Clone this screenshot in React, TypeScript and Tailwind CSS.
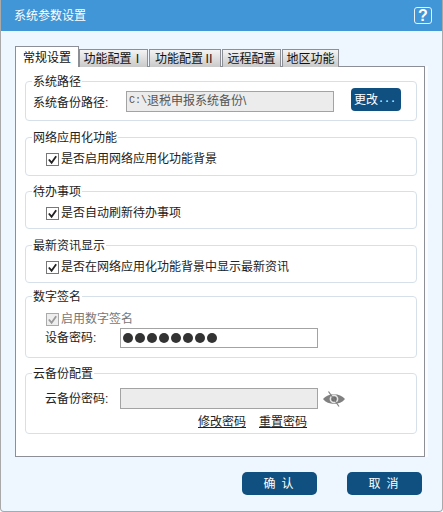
import type { ReactNode } from "react";

const FONT = "font-['Liberation_Sans','Noto_Sans_CJK_SC',sans-serif]";

function Group({ title, className, children }: { title: string; className: string; children: ReactNode }) {
  return (
    <fieldset className={`ml-[9px] w-[392px] rounded-[4px] border border-[#d6e0e9] ${className}`}>
      <legend className="ml-[6px] bg-white px-px text-[12px] leading-[14px] text-[#222]">
        <span className="block translate-y-px">{title}</span>
      </legend>
      {children}
    </fieldset>
  );
}

function Check({ label, disabled }: { label: string; disabled?: boolean }) {
  return (
    <label className={`flex items-center gap-[2px] text-[12px] leading-4 ${disabled ? "text-[#777]" : "text-[#222]"}`}>
      <span className={`flex h-[13px] w-[13px] items-center justify-center border ${disabled ? "border-[#aaa] bg-[#eee]" : "border-[#777] bg-white"}`}>
        <svg viewBox="0 0 12 12" className="h-[11px] w-[11px]">
          <path d="M2 6 L5 9.5 L10 2.5" fill="none" stroke={disabled ? "#999" : "#222"} strokeWidth="2" />
        </svg>
      </span>
      {label}
    </label>
  );
}

function Tab({ label, className }: { label: string; className: string }) {
  return (
    <div className={`flex h-[18px] items-center justify-center border border-b-0 border-[#8c8f96] bg-gradient-to-b from-[#f4f4f4] to-[#c9c9c9] text-[12px] text-[#111] ${className}`}>
      {label}
    </div>
  );
}

function EyeIcon() {
  return (
    <svg viewBox="0 0 22 16" className="h-[16px] w-[22px]">
      <path d="M0 8 C5 1.5 17 1.5 22 8 C17 14.5 5 14.5 0 8 Z" fill="#808080" />
      <circle cx="11" cy="8" r="4.4" fill="#e6e6e6" />
      <circle cx="11" cy="8" r="2.8" fill="#707070" />
      <path d="M5.5 0.5 L16 15.5" stroke="#808080" strokeWidth="1.2" />
    </svg>
  );
}

export default function App() {
  return (
    <div className={`flex h-[512px] w-[443px] flex-col overflow-hidden rounded-b-[4px] border-x border-b border-[#a9a9a9] bg-[#eef6ff] ${FONT}`}>
      <div className="-mx-px flex h-[31px] shrink-0 items-center justify-between bg-[#4096d6] pl-[14px] pr-[11px]">
        <span className="text-[12px] text-white">系统参数设置</span>
        <span className="flex h-[17px] w-[18px] items-center justify-center rounded-[3px] border border-[#e8f3fb] text-[16px] font-bold leading-none text-white">?</span>
      </div>

      <div className="pl-[14px] pt-[15px]">
        <div className="relative z-10 -mb-px flex h-[21px] items-end gap-px">
          <div className="-mr-px flex h-[21px] w-[64px] items-center justify-center border border-b-0 border-[#8c8f96] bg-white pt-px text-[12px] text-[#111]">常规设置</div>
          <Tab label="功能配置Ⅰ" className="w-[69px]" />
          <Tab label="功能配置Ⅱ" className="w-[72px]" />
          <Tab label="远程配置" className="w-[59px]" />
          <Tab label="地区功能" className="w-[57px]" />
        </div>

        <div className="h-[391px] w-[410px] border border-[#8c8f96] bg-white pt-[7px] shadow-[3px_0_0_#fafcff]">
          <Group title="系统路径" className="h-[47px]">
            <div className="flex items-start pl-[7px]">
              <span className="mt-[6px] w-[93px] text-[12px] leading-[18px] text-[#222]">系统备份路径:</span>
              <div className="mt-[3px] flex h-[21px] w-[208px] items-center border border-[#a3a3a3] bg-[#ececec] pb-[2px] pl-[2px] text-[12px] text-[#555]">
                <span className="font-['Liberation_Mono'] text-[10px]">C:\</span>退税申报系统备份\
              </div>
              <button className="ml-[17px] flex h-[23px] w-[50px] items-center rounded-[4px] bg-[#105080] pl-[3px] text-[12px] text-white">
                更改<span className="font-['Liberation_Mono'] text-[10px]">...</span>
              </button>
            </div>
          </Group>

          <Group title="网络应用化功能" className="mt-[9px] h-[46px]">
            <div className="pl-[20px] pt-[7px]"><Check label="是否启用网络应用化功能背景" /></div>
          </Group>

          <Group title="待办事项" className="mt-[8px] h-[45px]">
            <div className="pl-[20px] pt-[7px]"><Check label="是否自动刷新待办事项" /></div>
          </Group>

          <Group title="最新资讯显示" className="mt-[9px] h-[45px]">
            <div className="pl-[20px] pt-[7px]"><Check label="是否在网络应用化功能背景中显示最新资讯" /></div>
          </Group>

          <Group title="数字签名" className="mt-[6px] h-[69px]">
            <div className="pl-[20px] pt-[8px]"><Check label="启用数字签名" disabled /></div>
            <div className="mt-px flex items-center pl-[19px]">
              <span className="w-[75px] text-[12px] text-[#222]">设备密码:</span>
              <div className="flex h-[20px] w-[198px] items-center gap-[2px] border border-[#a3a3a3] bg-white pl-[2px]">
                {Array.from({ length: 8 }).map((_, i) => (
                  <span key={i} className="h-[10px] w-[10px] rounded-full bg-[#333]" />
                ))}
              </div>
            </div>
          </Group>

          <Group title="云备份配置" className="mt-[8px] h-[68px]">
            <div className="flex items-center pl-[19px] pt-[8px]">
              <span className="w-[75px] text-[12px] text-[#222]">云备份密码:</span>
              <div className="h-[21px] w-[198px] border border-[#a3a3a3] bg-[#ececec]" />
              <span className="ml-[5px] flex"><EyeIcon /></span>
            </div>
            <div className="mt-[5px] flex gap-[13px] pl-[172px] text-[12px] leading-4 text-[#222] underline">
              <span>修改密码</span>
              <span>重置密码</span>
            </div>
          </Group>
        </div>
      </div>

      <div className="mt-[15px] flex gap-[30px] pl-[241px]">
        <button className="h-[23px] w-[75px] rounded-[5px] bg-[#105080] pl-[4px] text-[12px] tracking-[6px] text-white">确认</button>
        <button className="h-[23px] w-[75px] rounded-[5px] bg-[#105080] pl-[4px] text-[12px] tracking-[6px] text-white">取消</button>
      </div>
    </div>
  );
}
